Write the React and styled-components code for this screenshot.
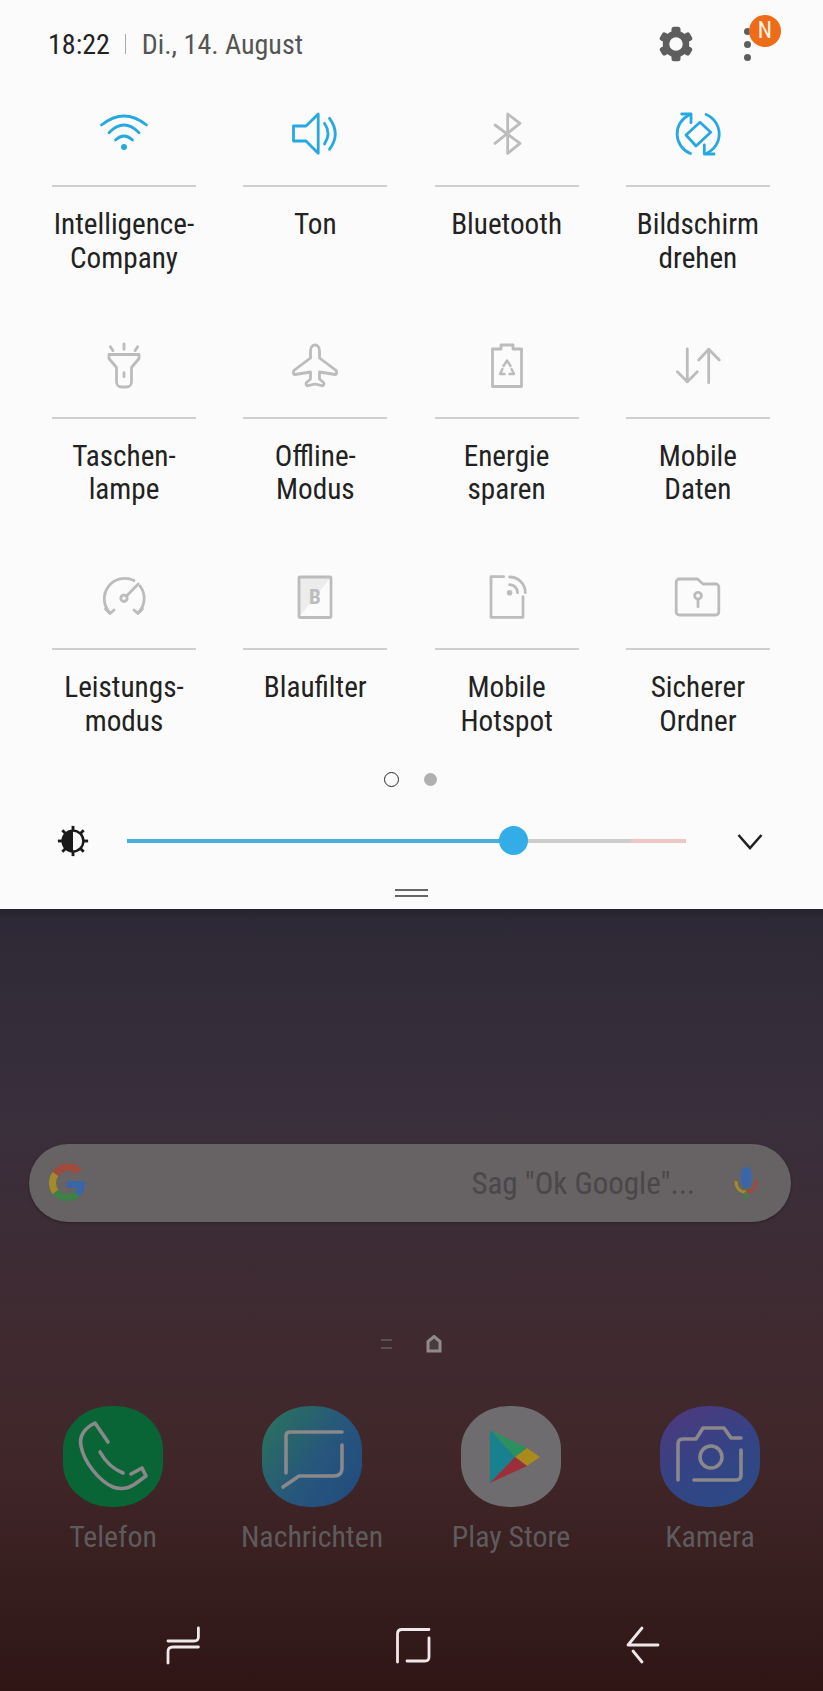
import React from 'react';
import styled, { createGlobalStyle } from 'styled-components';

const GlobalStyle = createGlobalStyle`
  html, body {
    margin: 0;
    padding: 0;
    background: #2f1617;
  }
  * {
    box-sizing: border-box;
  }
`;

const Screen = styled.div`
  width: 823px;
  height: 1691px;
  display: flex;
  flex-direction: column;
  overflow: hidden;
  font-family: Roboto, 'Liberation Sans', sans-serif;
  font-stretch: 75%;
`;

const Panel = styled.div`
  height: 909px;
  background: #fbfbfb;
  display: flex;
  flex-direction: column;
`;

const Header = styled.div`
  height: 88px;
  flex: none;
  display: flex;
  align-items: center;
  padding-left: 48px;
`;

const Clock = styled.span`
  font-size: 28px;
  color: #222;
`;

const Separator = styled.span`
  width: 1px;
  height: 20px;
  background: #a8a8a8;
  margin: 0 16px 0 15px;
`;

const DateText = styled.span`
  font-size: 28px;
  color: #555;
  flex: 1;
`;

const GearButton = styled.svg`
  width: 40px;
  height: 40px;
  margin-right: 44px;
  color: #5e5e5e;
`;

const Menu = styled.div`
  position: relative;
  width: 14px;
  margin-right: 69px;
  display: flex;
  flex-direction: column;
  align-items: center;
  gap: 6px;
`;

const MenuDot = styled.span`
  width: 7px;
  height: 7px;
  border-radius: 50%;
  background: #5e5e5e;
`;

const Badge = styled.span`
  position: absolute;
  left: 9px;
  top: -13px;
  width: 32px;
  height: 32px;
  border-radius: 50%;
  background: #ee6b17;
  color: #fff4e8;
  font-size: 23px;
  display: flex;
  align-items: center;
  justify-content: center;
`;

const Tiles = styled.div`
  display: grid;
  grid-template-columns: repeat(4, 144px);
  column-gap: 47.3px;
  row-gap: 60.7px;
  padding: 16px 0 0 52px;
`;

const Tile = styled.div`
  display: flex;
  flex-direction: column;
  height: 171px;
`;

const TileIcon = styled.svg`
  width: 60px;
  height: 60px;
  flex: none;
  align-self: center;
  color: ${({ $on }) => ($on ? '#27a8e0' : '#bcbcbc')};
  fill: none;
  stroke: currentColor;
  stroke-width: 2.8;
  stroke-linecap: round;
  stroke-linejoin: round;
`;

const Divider = styled.div`
  height: 2px;
  flex: none;
  background: #cfcfcf;
  margin: 21px 0;
`;

const TileLabel = styled.div`
  font-size: 29.2px;
  line-height: 33.5px;
  color: #222;
  text-align: center;
  white-space: nowrap;
`;

const Pager = styled.div`
  display: flex;
  justify-content: center;
  align-items: center;
  gap: 25px;
  margin-top: 34px;
  padding-right: 2px;
  height: 15px;
`;

const PagerDot = styled.span`
  width: ${({ $current }) => ($current ? '15px' : '13px')};
  height: ${({ $current }) => ($current ? '15px' : '13px')};
  border-radius: 50%;
  background: ${({ $current }) => ($current ? 'transparent' : '#b0b0b0')};
  border: ${({ $current }) => ($current ? '1.5px solid #2a2a2a' : 'none')};
`;

const BrightnessRow = styled.div`
  display: flex;
  align-items: center;
  height: 40px;
  margin-top: 34px;
  padding-left: 56px;
`;

const Track = styled.div`
  position: relative;
  display: flex;
  width: 559px;
  height: 4px;
  margin: 0 51.5px 0 36.5px;
`;

const TrackPart = styled.div`
  width: ${({ $width }) => $width}px;
  background: ${({ $color }) => $color};
`;

const Thumb = styled.div`
  position: absolute;
  left: 372.5px;
  top: -13px;
  width: 29px;
  height: 29px;
  border-radius: 50%;
  background: #33ade8;
`;

const Grip = styled.div`
  align-self: center;
  width: 33px;
  height: 8px;
  margin-top: 28px;
  border-top: 2px solid #666;
  border-bottom: 2px solid #666;
`;

const Wallpaper = styled.div`
  flex: 1;
  display: flex;
  flex-direction: column;
  background: linear-gradient(
    #26222d 0,
    #2e2936 10px,
    #392f3c 200px,
    #402a30 440px,
    #402628 560px,
    #2f1615 782px
  );
`;

const SearchBar = styled.div`
  height: 78px;
  margin: 235px 32px 0 29px;
  padding: 0 33px 0 20px;
  border-radius: 39px;
  background: #676263;
  display: flex;
  align-items: center;
  box-shadow: 0 1px 3px rgba(0, 0, 0, 0.3);
`;

const SearchHint = styled.span`
  margin-left: auto;
  margin-right: 39px;
  font-size: 31px;
  color: #4a474b;
`;

const HomeDots = styled.div`
  display: flex;
  justify-content: center;
  align-items: center;
  gap: 34px;
  height: 20px;
  margin-top: 112px;
`;

const ListMark = styled.span`
  width: 11px;
  height: 10px;
  border-top: 2px solid #5a5052;
  border-bottom: 2px solid #5a5052;
`;

const Dock = styled.div`
  display: grid;
  grid-template-columns: repeat(4, 199px);
  padding-left: 13.5px;
  margin-top: 52px;
`;

const DockApp = styled.div`
  display: flex;
  flex-direction: column;
  align-items: center;
`;

const AppIcon = styled.div`
  width: 100px;
  height: 101px;
  border-radius: 48% / 43%;
  background: ${({ $bg }) => $bg};
  display: flex;
`;

const AppGlyph = styled.svg`
  width: 100%;
  height: 100%;
  fill: none;
  stroke: #8a888b;
  stroke-width: 3.6;
  stroke-linecap: round;
  stroke-linejoin: round;
`;

const AppName = styled.span`
  margin-top: 13px;
  font-size: 29.8px;
  line-height: 34px;
  color: #5f5b5d;
  white-space: nowrap;
`;

const NavBar = styled.div`
  display: flex;
  gap: 190px;
  padding-left: 163px;
  margin-top: 71px;
`;

const NavIcon = styled.svg`
  width: 40px;
  height: 40px;
  fill: none;
  stroke: #efe8e8;
  stroke-width: 2.8;
  stroke-linecap: round;
  stroke-linejoin: round;
`;

const quickTiles = [
  {
    label: ['Intelligence-', 'Company'],
    on: true,
    icon: (
      <>
        <path d="M7.5 21Q30 3 52.5 21" />
        <path d="M15 28.7Q30 13.3 45 28.7" />
        <path d="M21.5 36Q30 28 38.5 36" />
        <circle cx="30" cy="43" r="1.6" fill="currentColor" />
      </>
    ),
  },
  {
    label: ['Ton'],
    on: true,
    icon: (
      <>
        <path d="M8.5 22H21L33.2 10V49.3L21 37H8.5Z" />
        <path d="M39.5 19.3Q46.5 29.6 39.5 40" />
        <path d="M44.5 14.3Q56 29.8 44.5 45.3" />
      </>
    ),
  },
  {
    label: ['Bluetooth'],
    icon: <path d="M18 21L43 39.3L30.7 49.3V10L43 19.3L18 39.3" />,
  },
  {
    label: ['Bildschirm', 'drehen'],
    on: true,
    icon: (
      <>
        <path d="M18 31L32 18.3L42.7 28.3L28 42Z" />
        <path d="M21 11A21 21 0 0 0 22.5 49.5" />
        <path d="M38 10.5A21 21 0 0 1 38 49.5" />
        <path d="M13.7 10H23V18.7" />
        <path d="M46 50H36.3V41" />
      </>
    ),
  },
  {
    label: ['Taschen-', 'lampe'],
    icon: (
      <>
        <path d="M15 18.5H45V22.5L37.5 31.5V46a5 5 0 0 1-5 5H27.5a5 5 0 0 1-5-5V31.5L15 22.5Z" />
        <path d="M30 36.7V40.7" />
        <path d="M30 8V13.3" />
        <path d="M16.4 10.7L19 14.7" />
        <path d="M43.6 10.7L41 14.7" />
      </>
    ),
  },
  {
    label: ['Offline-', 'Modus'],
    icon: (
      <path d="M30 9c2.7 0 4.5 3 4.5 6V22L50.5 34c1.5 1 1.5 4.5-.5 4.5L34.5 36V43L38.5 46.5c1.2 1.4.3 3.5-1.5 3.2L30 48L23 49.7c-1.8.3-2.7-1.8-1.5-3.2L25.5 43V36L10 38.5c-2 0-2-3.5-.5-4.5L25.5 22V15c0-3 1.8-6 4.5-6Z" />
    ),
  },
  {
    label: ['Energie', 'sparen'],
    icon: (
      <>
        <path d="M15.5 13H24V9H36V13H44.5V50.5H15.5Z" />
        <g strokeWidth="2.4">
          <path d="M26.5 30L30 24.5L33.5 30" />
          <path d="M25.5 33L23 38H27.5" />
          <path d="M34.5 33L37 38H32.5" />
        </g>
      </>
    ),
  },
  {
    label: ['Mobile', 'Daten'],
    icon: (
      <>
        <path d="M19.3 13V45.7" />
        <path d="M9.3 35.7L19.3 45.7L29.3 35.7" />
        <path d="M40.7 13.3V46.7" />
        <path d="M30.7 24L40.7 13.3L51.3 24" />
      </>
    ),
  },
  {
    label: ['Leistungs-', 'modus'],
    icon: (
      <>
        <path d="M16 46A20.5 20.5 0 0 1 40 13.5" />
        <path d="M46 19A20.5 20.5 0 0 1 44 46" />
        <circle cx="30" cy="31.3" r="3.2" />
        <path d="M32.5 29L44.3 17" />
        <path d="M11.5 42L16 46.5L20 43" />
        <path d="M40 43L44 46.5L48.5 42" />
      </>
    ),
  },
  {
    label: ['Blaufilter'],
    icon: (
      <>
        <path d="M14 10H46L14 50Z" fill="#ececec" stroke="none" />
        <rect x="14" y="10" width="32" height="40.5" rx="1" />
        <text x="30" y="37" fontSize="21" fontWeight="700" textAnchor="middle" fill="#bcbcbc" stroke="none" fontFamily="Roboto, sans-serif">
          B
        </text>
      </>
    ),
  },
  {
    label: ['Mobile', 'Hotspot'],
    icon: (
      <>
        <path d="M26.6 9.7H14V50.3H46V29.7" />
        <circle cx="32.6" cy="25.7" r="1.4" fill="currentColor" />
        <path d="M32.6 17.7A8 8 0 0 1 40.6 25.7" />
        <path d="M32.6 10A15.7 15.7 0 0 1 48.3 25.7" />
      </>
    ),
  },
  {
    label: ['Sicherer', 'Ordner'],
    icon: (
      <>
        <path d="M8.2 15a3 3 0 0 1 3-3H29.5L35 17H47.8a3 3 0 0 1 3 3V45a3 3 0 0 1-3 3H11.2a3 3 0 0 1-3-3Z" />
        <circle cx="30" cy="28.7" r="3.4" />
        <path d="M30 32.1V39.7" />
      </>
    ),
  },
];

function Gear() {
  return (
    <GearButton viewBox="0 0 40 40">
      {[0, 60, 120, 180, 240, 300].map((angle) => (
        <rect
          key={angle}
          x="15.5"
          y="2.8"
          width="9"
          height="10"
          rx="2.5"
          fill="currentColor"
          transform={`rotate(${angle} 20 20)`}
        />
      ))}
      <circle cx="20" cy="20" r="10" fill="none" stroke="currentColor" strokeWidth="6.5" />
    </GearButton>
  );
}

function BrightnessIcon() {
  const rays = [0, 45, 90, 135, 180, 225, 270, 315];
  return (
    <svg width="34" height="34" viewBox="0 0 36 36">
      {rays.map((angle) => (
        <line
          key={angle}
          x1="18"
          y1="2"
          x2="18"
          y2="8"
          stroke="#1a1a1a"
          strokeWidth="3"
          transform={`rotate(${angle} 18 18)`}
        />
      ))}
      <circle cx="18" cy="18" r="11" fill="#fbfbfb" stroke="#1a1a1a" strokeWidth="2.6" />
      <path d="M18 7A11 11 0 0 0 18 29Z" fill="#1a1a1a" />
    </svg>
  );
}

function Chevron() {
  return (
    <svg width="26" height="17" viewBox="0 0 26 17" fill="none" stroke="#222" strokeWidth="2.6">
      <path d="M1.5 2L13 15L24.5 2" />
    </svg>
  );
}

function GoogleMark() {
  return (
    <svg width="36" height="38" viewBox="0 0 36 38" fill="none" strokeWidth="7">
      <path d="M30 7.5A15 15 0 0 0 6.5 10" stroke="#a3483c" />
      <path d="M6.5 10A15 15 0 0 0 6.5 28" stroke="#a58a2b" />
      <path d="M6.5 28A15 15 0 0 0 28 30" stroke="#3f8046" />
      <path d="M28 30A15 15 0 0 0 33 20.5H18" stroke="#3a66a8" />
    </svg>
  );
}

function MicMark() {
  return (
    <svg width="24" height="34" viewBox="0 0 24 34" fill="none">
      <rect x="7" y="1" width="10.5" height="21" rx="5.2" fill="#3a66a8" />
      <path d="M2 15C2 22 6 26 12 26" stroke="#a58a2b" strokeWidth="3" />
      <path d="M22 15C22 22 18 26 12 26" stroke="#a3483c" strokeWidth="3" />
      <path d="M12 26V33" stroke="#3f8046" strokeWidth="3" />
    </svg>
  );
}

const dockApps = [
  {
    name: 'Telefon',
    bg: '#0a6536',
    glyph: (
      <>
        <path d="M45 36L32 17C22 22 16 30 18 40C21 56 36 75 50 81C58 84 66 82 72 78L83 70L79 62L68 68" />
        <path d="M37 46C42 55 50 63 60 67" />
      </>
    ),
  },
  {
    name: 'Nachrichten',
    bg: 'linear-gradient(125deg, #2a6f60 10%, #27567c 55%, #214a80)',
    glyph: (
      <>
        <path d="M80 26H28Q24 26 24 30V67" />
        <path d="M80 39V62Q80 70 72 70H37L21 81" />
      </>
    ),
  },
  {
    name: 'Play Store',
    bg: '#6e6c6e',
    glyph: (
      <g stroke="none">
        <path d="M29 24V77L54 51Z" fill="#19808f" />
        <path d="M29 24L54 51L66 42Z" fill="#2c8f60" />
        <path d="M66 42L79 51L66 60L54 51Z" fill="#a98a1a" />
        <path d="M29 77L54 51L66 60Z" fill="#9c2f3c" />
      </g>
    ),
  },
  {
    name: 'Kamera',
    bg: 'linear-gradient(150deg, #4b3a7f 10%, #354385 50%, #2a4c85)',
    glyph: (
      <>
        <path d="M18 74V38Q18 33 23 33H36L43 22H64L71 32H81" />
        <path d="M81 44V69Q81 74 76 74H34" />
        <circle cx="51" cy="51" r="11" />
      </>
    ),
  },
];

export default function App() {
  return (
    <Screen>
      <GlobalStyle />
      <Panel>
        <Header>
          <Clock>18:22</Clock>
          <Separator />
          <DateText>Di., 14. August</DateText>
          <Gear />
          <Menu>
            <MenuDot />
            <MenuDot />
            <MenuDot />
            <Badge>N</Badge>
          </Menu>
        </Header>

        <Tiles>
          {quickTiles.map((tile) => (
            <Tile key={tile.label.join(' ')}>
              <TileIcon viewBox="0 0 60 60" $on={tile.on}>
                {tile.icon}
              </TileIcon>
              <Divider />
              <TileLabel>
                {tile.label.map((line) => (
                  <div key={line}>{line}</div>
                ))}
              </TileLabel>
            </Tile>
          ))}
        </Tiles>

        <Pager>
          <PagerDot $current />
          <PagerDot />
        </Pager>

        <BrightnessRow>
          <BrightnessIcon />
          <Track>
            <TrackPart $width={387} $color="#4aaedc" />
            <TrackPart $width={117} $color="#cdcdcd" />
            <TrackPart $width={55} $color="#efc6c6" />
            <Thumb />
          </Track>
          <Chevron />
        </BrightnessRow>

        <Grip />
      </Panel>

      <Wallpaper>
        <SearchBar>
          <GoogleMark />
          <SearchHint>Sag "Ok Google"...</SearchHint>
          <MicMark />
        </SearchBar>

        <HomeDots>
          <ListMark />
          <svg width="16" height="18" viewBox="0 0 16 18">
            <path d="M8 1.5L14 6.5V16H2V6.5Z" fill="#4a3b3e" stroke="#8f8a8b" strokeWidth="3" />
          </svg>
        </HomeDots>

        <Dock>
          {dockApps.map((app) => (
            <DockApp key={app.name}>
              <AppIcon $bg={app.bg}>
                <AppGlyph viewBox="0 0 100 101">{app.glyph}</AppGlyph>
              </AppIcon>
              <AppName>{app.name}</AppName>
            </DockApp>
          ))}
        </Dock>

        <NavBar>
          <NavIcon viewBox="0 0 40 40">
            <path d="M35.4 3V12Q35.4 16 31 16H5" />
            <path d="M35.4 22H10Q5 22 5 27V38" />
          </NavIcon>
          <NavIcon viewBox="0 0 40 40">
            <path d="M4.5 37V9Q4.5 4.5 9 4.5H36" />
            <path d="M36 13V32Q36 36 32 36H14" />
          </NavIcon>
          <NavIcon viewBox="0 0 40 40">
            <path d="M19 3L5 20H35" />
            <path d="M10 26L19 37" />
          </NavIcon>
        </NavBar>
      </Wallpaper>
    </Screen>
  );
}
